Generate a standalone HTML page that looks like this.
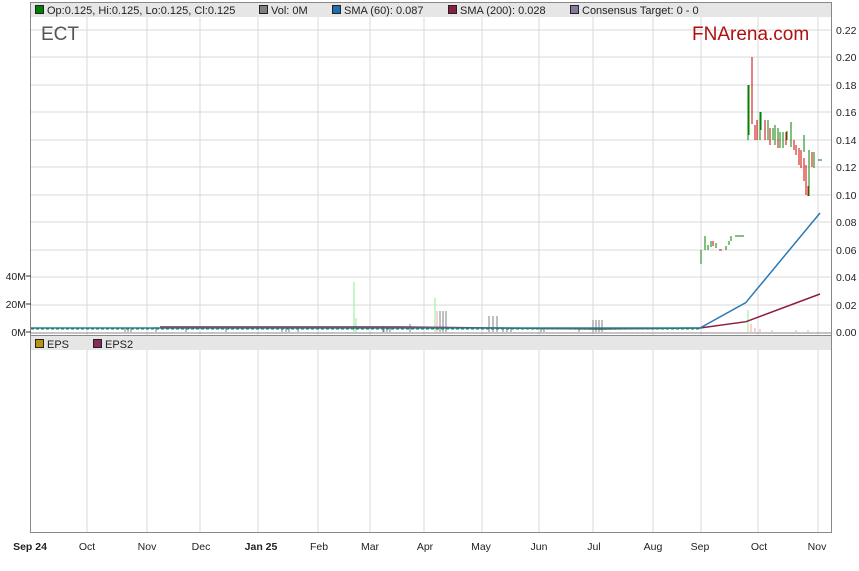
<!DOCTYPE html>
<html><head><meta charset="utf-8"><style>
body{margin:0;background:#fff;width:859px;height:566px;overflow:hidden;font-family:"Liberation Sans",sans-serif}
svg text{font-family:"Liberation Sans",sans-serif}
</style></head><body>
<svg width="859" height="566" xmlns="http://www.w3.org/2000/svg">
<rect x="30" y="2" width="802" height="531" fill="#fff"/>
<rect x="31" y="3" width="800" height="14" fill="#e6e6e6"/>
<rect x="31" y="336" width="800" height="14" fill="#e6e6e6"/>
<g stroke="#d9d9d9" stroke-width="1">
<line x1="87" y1="17" x2="87" y2="336"/><line x1="147" y1="17" x2="147" y2="336"/><line x1="200" y1="17" x2="200" y2="336"/><line x1="258" y1="17" x2="258" y2="336"/><line x1="318" y1="17" x2="318" y2="336"/><line x1="370" y1="17" x2="370" y2="336"/><line x1="424" y1="17" x2="424" y2="336"/><line x1="482" y1="17" x2="482" y2="336"/><line x1="539" y1="17" x2="539" y2="336"/><line x1="593" y1="17" x2="593" y2="336"/><line x1="653" y1="17" x2="653" y2="336"/><line x1="701" y1="17" x2="701" y2="336"/><line x1="758" y1="17" x2="758" y2="336"/><line x1="818" y1="17" x2="818" y2="336"/>
<line x1="87" y1="350" x2="87" y2="532"/><line x1="147" y1="350" x2="147" y2="532"/><line x1="200" y1="350" x2="200" y2="532"/><line x1="258" y1="350" x2="258" y2="532"/><line x1="318" y1="350" x2="318" y2="532"/><line x1="370" y1="350" x2="370" y2="532"/><line x1="424" y1="350" x2="424" y2="532"/><line x1="482" y1="350" x2="482" y2="532"/><line x1="539" y1="350" x2="539" y2="532"/><line x1="593" y1="350" x2="593" y2="532"/><line x1="653" y1="350" x2="653" y2="532"/><line x1="701" y1="350" x2="701" y2="532"/><line x1="758" y1="350" x2="758" y2="532"/><line x1="818" y1="350" x2="818" y2="532"/>
<line x1="31" y1="30" x2="831" y2="30"/><line x1="31" y1="57" x2="831" y2="57"/><line x1="31" y1="85" x2="831" y2="85"/><line x1="31" y1="112" x2="831" y2="112"/><line x1="31" y1="140" x2="831" y2="140"/><line x1="31" y1="167" x2="831" y2="167"/><line x1="31" y1="195" x2="831" y2="195"/><line x1="31" y1="222" x2="831" y2="222"/><line x1="31" y1="250" x2="831" y2="250"/><line x1="31" y1="277" x2="831" y2="277"/><line x1="31" y1="305" x2="831" y2="305"/>
</g>
<g stroke="#808080" stroke-width="1">
<path d="M156 332V327M186 332V328M226 332V329M282 332V327M286 332V327M289 332V327M298 332V328M384 332V327M387 332V328M390 332V328M383 332V326M410 332V324M440 332V311M443 332V311M446 332V311M489 332V316M493 332V316M497 332V316M503 332V328M507 332V328M511 332V328M541 332V329M544 332V329M579 332V328M593 332V320M596 332V320M599 332V320M602 332V320M125 332V329M128 332V329M131 332V329"/>
</g>
<path d="M354 332V282M356 332V318M435 332V298M748 332V310" stroke="#90ee90" stroke-width="1"/>
<path d="M437 332V311M751 332V324M755 332V328M760 332V329M772 332V330M796 332V330M808 332V330" stroke="#f4a0a0" stroke-width="1"/>
<polyline points="160,327 400,327 600,329 700,328 746,321.7 820,294" fill="none" stroke="#8b1f3f" stroke-width="1.5"/>
<polyline points="31,328 700,328 745.7,302.7 820,213" fill="none" stroke="#2a7ab8" stroke-width="1.5"/>
<path d="M31 329H700" stroke="#1a8a1a" stroke-width="1" stroke-dasharray="3,2"/>
<g stroke="#008000" stroke-width="1" fill="none">
<path d="M701 264V250M705 250V236M708 250V245M711 247V241M716 248V243M726 250V246M729 245V241M731 241V236M735 236H744" />
<path d="M748 140V85M749 135V85M760 140V112M761 130V112M768 140V120M773 140V128M775 145V125M778 140V128M780 148V132M783 148V132M787 140V131M791 147V122M804 152V135M809 196V150M814 168V152M818 160H822"/>
</g>
<g stroke="#d00000" stroke-width="1" fill="none">
<path d="M713 246V241M719 250H722M752 124V57M755 140V125M757 140V120M765 140V120M770 145V128M778 148V138M786 145V132M794 150V140M796 155V145M799 165V148M801 168V150M804 181V158M806 195V165M808 196V186M812 167V152"/>
</g>
<rect x="30.5" y="2.5" width="801" height="530" fill="none" stroke="#888"/>
<line x1="31" y1="333" x2="831" y2="333" stroke="#888"/>
<line x1="31" y1="335.5" x2="831" y2="335.5" stroke="#888"/>
<g stroke="#333"><path d="M26 276H31M26 304H31M26 332H31"/></g>
<g font-size="11" fill="#222">
<rect x="35.5" y="5.5" width="8" height="8" fill="#008000" stroke="#222"/><text x="47" y="14">Op:0.125, Hi:0.125, Lo:0.125, Cl:0.125</text>
<rect x="259.5" y="5.5" width="8" height="8" fill="#808080" stroke="#222"/><text x="271" y="14">Vol: 0M</text>
<rect x="332.5" y="5.5" width="8" height="8" fill="#1f6fb0" stroke="#222"/><text x="344" y="14">SMA (60): 0.087</text>
<rect x="448.5" y="5.5" width="8" height="8" fill="#8b1f3f" stroke="#222"/><text x="460" y="14">SMA (200): 0.028</text>
<rect x="570.5" y="5.5" width="8" height="8" fill="#8878a0" stroke="#222"/><text x="582" y="14">Consensus Target: 0 - 0</text>
<rect x="35.5" y="339.5" width="8" height="8" fill="#b8960a" stroke="#222"/><text x="47" y="348">EPS</text>
<rect x="93.5" y="339.5" width="8" height="8" fill="#8b2a5a" stroke="#222"/><text x="105" y="348">EPS2</text>
</g>
<text x="41" y="40" font-size="19" fill="#555">ECT</text>
<text x="692" y="40" font-size="19" fill="#b01010">FNArena.com</text>
<g font-size="10.5" fill="#222">
<text x="836" y="34">0.22</text><text x="836" y="61">0.20</text><text x="836" y="89">0.18</text><text x="836" y="116">0.16</text><text x="836" y="144">0.14</text><text x="836" y="171">0.12</text><text x="836" y="199">0.10</text><text x="836" y="226">0.08</text><text x="836" y="254">0.06</text><text x="836" y="281">0.04</text><text x="836" y="309">0.02</text><text x="836" y="336">0.00</text>
</g>
<g font-size="10.5" fill="#222" text-anchor="end">
<text x="26" y="280">40M</text><text x="26" y="308">20M</text><text x="26" y="336">0M</text>
</g>
<g font-size="10.5" fill="#222" text-anchor="middle">
<text x="30" y="550" font-weight="bold">Sep 24</text><text x="87" y="550">Oct</text><text x="147" y="550">Nov</text><text x="201" y="550">Dec</text><text x="261" y="550" font-weight="bold">Jan 25</text><text x="319" y="550">Feb</text><text x="370" y="550">Mar</text><text x="425" y="550">Apr</text><text x="481" y="550">May</text><text x="539" y="550">Jun</text><text x="594" y="550">Jul</text><text x="653" y="550">Aug</text><text x="700" y="550">Sep</text><text x="759" y="550">Oct</text><text x="817" y="550">Nov</text>
</g>
</svg>
</body></html>
